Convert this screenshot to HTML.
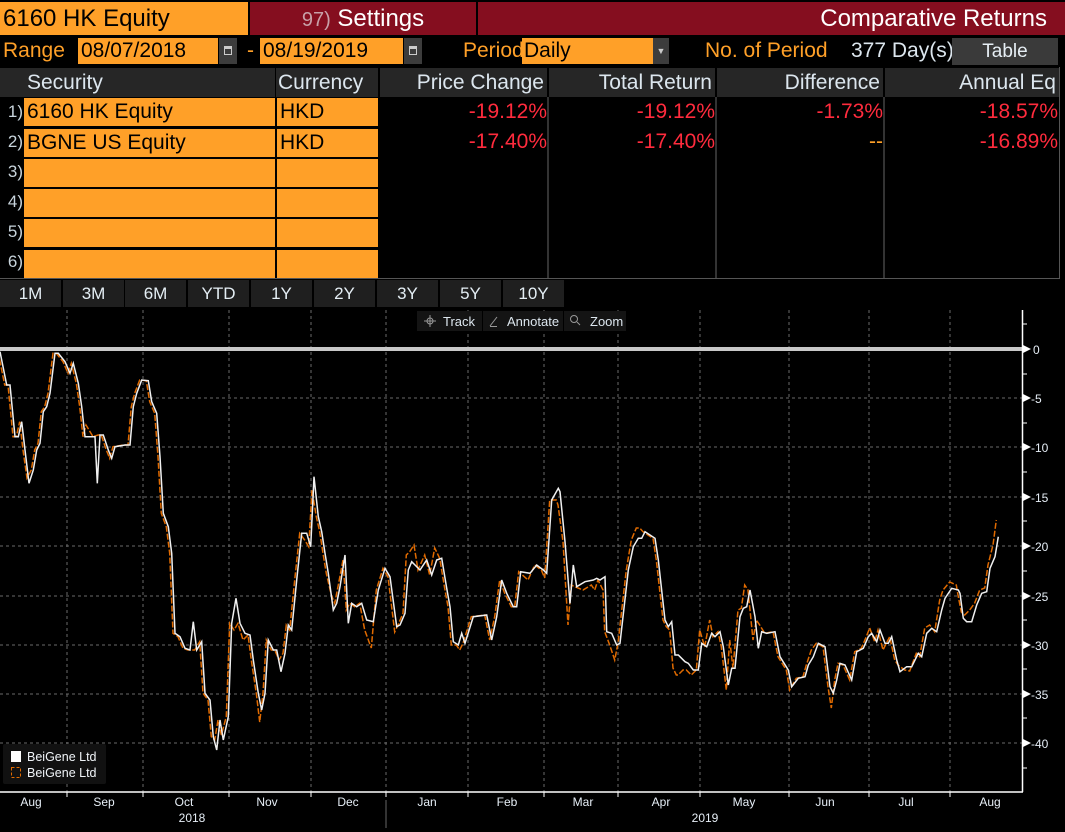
<!DOCTYPE html>
<html><head><meta charset="utf-8"><style>
*{margin:0;padding:0;box-sizing:border-box}
body{width:1065px;height:832px;background:#000;overflow:hidden;position:relative;font-family:"Liberation Sans Narrow","Liberation Sans",sans-serif;}
.a{position:absolute;white-space:nowrap;overflow:hidden}
.or{background:#ffa028;color:#000}
.red{background:#850e1f;color:#fff}
.lbl{color:#ffa028;font-size:21px;line-height:28px}
.hd{background:#262626;color:#dce6ee;font-size:21px;line-height:29px}
.num{color:#ff2b3d;font-size:21px;line-height:28px;text-align:right}
.rn{color:#c8d4dc;font-size:17px;line-height:30px;text-align:right}
.cal{background:#3c3c3c}
.btn{background:#1f1f1f;color:#e4eef4;font-size:17px;line-height:28px;text-align:center;top:280px;height:27px;width:61px}
.ax{font-family:"Liberation Sans",sans-serif;font-size:12px;fill:#e6eef6}
</style></head><body>
<div class="a or" style="left:0;top:2px;width:248px;height:33px;font-size:24px;line-height:33px;padding-left:3px">6160 HK Equity</div>
<div class="a red" style="left:250px;top:2px;width:226px;height:33px;font-size:24px;line-height:33px;text-align:center"><span style="color:#c8a0a8;font-size:20px">97)</span> Settings</div>
<div class="a red" style="left:478px;top:2px;width:587px;height:33px;font-size:24px;line-height:33px;text-align:right;padding-right:18px">Comparative Returns</div>

<div class="a lbl" style="left:3px;top:37px">Range</div>
<div class="a or" style="left:78px;top:38px;width:140px;height:26px;font-size:21px;line-height:26px;padding-left:3px">08/07/2018</div>
<div class="a cal" style="left:219px;top:38px;width:18px;height:26px"><div style="position:absolute;left:5px;top:8px;width:8px;height:9px;border:1.5px solid #ccc;border-top-width:3px"></div></div>
<div class="a lbl" style="left:247px;top:37px">-</div>
<div class="a or" style="left:260px;top:38px;width:143px;height:26px;font-size:21px;line-height:26px;padding-left:3px">08/19/2019</div>
<div class="a cal" style="left:404px;top:38px;width:18px;height:26px"><div style="position:absolute;left:5px;top:8px;width:8px;height:9px;border:1.5px solid #ccc;border-top-width:3px"></div></div>
<div class="a lbl" style="left:463px;top:37px">Period</div>
<div class="a or" style="left:522px;top:38px;width:131px;height:26px;font-size:21px;line-height:26px;padding-left:2px">Daily</div>
<div class="a cal" style="left:653px;top:38px;width:16px;height:26px;color:#ccc;font-size:9px;line-height:26px;text-align:center">▼</div>
<div class="a lbl" style="left:705px;top:37px">No. of Period</div>
<div class="a" style="left:851px;top:37px;color:#dce6ee;font-size:21px;line-height:28px">377 Day(s)</div>
<div class="a" style="left:952px;top:38px;width:106px;height:27px;background:#3a3a3a;color:#e6eef4;font-size:19px;line-height:27px;text-align:center">Table</div>

<!-- table -->
<div class="a" style="left:0;top:67px;width:1060px;height:212px;border-right:1px solid #555;border-bottom:1px solid #555"></div>
<div class="a hd" style="left:0;top:68px;width:24px;height:29px"></div>
<div class="a hd" style="left:24px;top:68px;width:251px;height:29px;padding-left:3px">Security</div>
<div class="a hd" style="left:276px;top:68px;width:102px;height:29px;padding-left:2px">Currency</div>
<div class="a hd" style="left:380px;top:68px;width:167px;height:29px;text-align:right;padding-right:3px">Price Change</div>
<div class="a hd" style="left:549px;top:68px;width:166px;height:29px;text-align:right;padding-right:3px">Total Return</div>
<div class="a hd" style="left:717px;top:68px;width:166px;height:29px;text-align:right;padding-right:3px">Difference</div>
<div class="a hd" style="left:885px;top:68px;width:174px;height:29px;text-align:right;padding-right:3px">Annual Eq</div>
<div class="a" style="left:547px;top:97px;width:2px;height:181px;background:#333"></div>
<div class="a" style="left:715px;top:97px;width:2px;height:181px;background:#333"></div>
<div class="a" style="left:883px;top:97px;width:2px;height:181px;background:#333"></div>

<div class="a rn" style="left:0;top:97px;width:23px">1)</div>
<div class="a rn" style="left:0;top:127px;width:23px">2)</div>
<div class="a rn" style="left:0;top:157px;width:23px">3)</div>
<div class="a rn" style="left:0;top:187px;width:23px">4)</div>
<div class="a rn" style="left:0;top:217px;width:23px">5)</div>
<div class="a rn" style="left:0;top:247px;width:23px">6)</div>

<div class="a or" style="left:24px;top:98px;width:251px;height:28px;font-size:21px;line-height:28px;padding-left:3px">6160 HK Equity</div>
<div class="a or" style="left:277px;top:98px;width:101px;height:28px;font-size:21px;line-height:28px;padding-left:3px">HKD</div>
<div class="a or" style="left:24px;top:129px;width:251px;height:28px;font-size:21px;line-height:28px;padding-left:3px">BGNE US Equity</div>
<div class="a or" style="left:277px;top:129px;width:101px;height:28px;font-size:21px;line-height:28px;padding-left:3px">HKD</div>
<div class="a or" style="left:24px;top:159px;width:251px;height:28px"></div>
<div class="a or" style="left:277px;top:159px;width:101px;height:28px"></div>
<div class="a or" style="left:24px;top:189px;width:251px;height:28px"></div>
<div class="a or" style="left:277px;top:189px;width:101px;height:28px"></div>
<div class="a or" style="left:24px;top:219px;width:251px;height:28px"></div>
<div class="a or" style="left:277px;top:219px;width:101px;height:28px"></div>
<div class="a or" style="left:24px;top:250px;width:251px;height:28px"></div>
<div class="a or" style="left:277px;top:250px;width:101px;height:28px"></div>

<div class="a num" style="left:380px;top:98px;width:167px">-19.12%</div>
<div class="a num" style="left:549px;top:98px;width:166px">-19.12%</div>
<div class="a num" style="left:717px;top:98px;width:166px">-1.73%</div>
<div class="a num" style="left:885px;top:98px;width:173px">-18.57%</div>
<div class="a num" style="left:380px;top:128px;width:167px">-17.40%</div>
<div class="a num" style="left:549px;top:128px;width:166px">-17.40%</div>
<div class="a num" style="left:717px;top:128px;width:166px;color:#ffa028">--</div>
<div class="a num" style="left:885px;top:128px;width:173px">-16.89%</div>

<div class="a btn" style="left:0">1M</div>
<div class="a btn" style="left:63px">3M</div>
<div class="a btn" style="left:125px">6M</div>
<div class="a btn" style="left:188px">YTD</div>
<div class="a btn" style="left:251px">1Y</div>
<div class="a btn" style="left:314px">2Y</div>
<div class="a btn" style="left:377px">3Y</div>
<div class="a btn" style="left:440px">5Y</div>
<div class="a btn" style="left:503px">10Y</div>

<svg class="a" style="left:0;top:308px" width="1065" height="524" viewBox="0 308 1065 524">
<g stroke="#6a6a6a" stroke-width="1" stroke-dasharray="3 3">
<line x1="67" y1="310" x2="67" y2="792"/><line x1="143" y1="310" x2="143" y2="792"/><line x1="229" y1="310" x2="229" y2="792"/><line x1="311" y1="310" x2="311" y2="792"/><line x1="386" y1="310" x2="386" y2="792"/><line x1="468" y1="310" x2="468" y2="792"/><line x1="544" y1="310" x2="544" y2="792"/><line x1="618" y1="310" x2="618" y2="792"/><line x1="700" y1="310" x2="700" y2="792"/><line x1="789" y1="310" x2="789" y2="792"/><line x1="869" y1="310" x2="869" y2="792"/><line x1="950" y1="310" x2="950" y2="792"/>
<line x1="0" y1="398" x2="1022" y2="398"/><line x1="0" y1="447" x2="1022" y2="447"/><line x1="0" y1="497" x2="1022" y2="497"/><line x1="0" y1="546" x2="1022" y2="546"/><line x1="0" y1="596" x2="1022" y2="596"/><line x1="0" y1="645" x2="1022" y2="645"/><line x1="0" y1="694" x2="1022" y2="694"/><line x1="0" y1="743" x2="1022" y2="743"/>
</g>
<line x1="0" y1="349" x2="1022" y2="349" stroke="#c8c8c8" stroke-width="4"/>
<line x1="1022.5" y1="310" x2="1022.5" y2="792" stroke="#fff" stroke-width="1.5"/>
<line x1="0" y1="792" x2="1023" y2="792" stroke="#fff" stroke-width="1.5"/>
<g stroke="#fff" stroke-width="1">
<line x1="1022" y1="324" x2="1027" y2="324"/><line x1="1022" y1="374" x2="1027" y2="374"/><line x1="1022" y1="423" x2="1027" y2="423"/><line x1="1022" y1="472" x2="1027" y2="472"/><line x1="1022" y1="521" x2="1027" y2="521"/><line x1="1022" y1="571" x2="1027" y2="571"/><line x1="1022" y1="620" x2="1027" y2="620"/><line x1="1022" y1="669" x2="1027" y2="669"/><line x1="1022" y1="718" x2="1027" y2="718"/><line x1="1022" y1="768" x2="1027" y2="768"/>
<line x1="67" y1="792" x2="67" y2="797"/><line x1="143" y1="792" x2="143" y2="797"/><line x1="229" y1="792" x2="229" y2="797"/><line x1="311" y1="792" x2="311" y2="797"/><line x1="386" y1="792" x2="386" y2="797"/><line x1="468" y1="792" x2="468" y2="797"/><line x1="544" y1="792" x2="544" y2="797"/><line x1="618" y1="792" x2="618" y2="797"/><line x1="700" y1="792" x2="700" y2="797"/><line x1="789" y1="792" x2="789" y2="797"/><line x1="869" y1="792" x2="869" y2="797"/><line x1="950" y1="792" x2="950" y2="797"/>
</g>
<line x1="386" y1="800" x2="386" y2="828" stroke="#666" stroke-width="1"/>
<g fill="#fff">
<path d="M1023 345l8 4-8 4z"/><path d="M1023 394l8 4-8 4z"/><path d="M1023 443l8 4-8 4z"/><path d="M1023 493l8 4-8 4z"/><path d="M1023 542l8 4-8 4z"/><path d="M1023 592l8 4-8 4z"/><path d="M1023 641l8 4-8 4z"/><path d="M1023 690l8 4-8 4z"/><path d="M1023 739l8 4-8 4z"/>
</g>
<g class="ax">
<text x="1033" y="354">0</text><text x="1031" y="403">-5</text><text x="1031" y="452">-10</text><text x="1031" y="502">-15</text><text x="1031" y="551">-20</text><text x="1031" y="601">-25</text><text x="1031" y="650">-30</text><text x="1031" y="699">-35</text><text x="1031" y="748">-40</text>
</g>
<g class="ax" text-anchor="middle">
<text x="31" y="806">Aug</text><text x="104" y="806">Sep</text><text x="184" y="806">Oct</text><text x="267" y="806">Nov</text><text x="348" y="806">Dec</text><text x="427" y="806">Jan</text><text x="507" y="806">Feb</text><text x="583" y="806">Mar</text><text x="661" y="806">Apr</text><text x="744" y="806">May</text><text x="825" y="806">Jun</text><text x="906" y="806">Jul</text><text x="990" y="806">Aug</text>
<text x="192" y="822">2018</text><text x="705" y="822">2019</text>
</g>
<polyline id="w" fill="none" stroke="#e06a00" stroke-width="1.5" stroke-dasharray="6 2" transform="translate(-2,0)" points="0,351.7 6.7,385 10,385 15,436.7 18.3,436.7 21.7,421.7 25,450 29,478 33.3,470 36.7,450 40,443.3 43.3,411.7 46.7,406.7 50,393.3 55,353.3 58.3,353.3 65,361.7 70,373.3 73.3,363.3 78.3,383.3 81.7,406.7 85,436.7 88,425 95,436.7 100,435 103.3,435 108.3,450 111.7,458.3 115,446.7 125,445 130,445 133.3,406.7 136.7,393.3 141.7,380 148.3,380.7 151.7,401.7 156.7,413.3 160,456.7 163.3,513.3 168.3,526.7 171.7,553.3 175,633.3 180,636.7 185,648.3 190,650 196.7,650 201.7,641.7 205,693.3 210,700 213.3,736.7 216.7,740 220,720 223.3,735 228.3,716.7 231.7,623.3 236,630 240,623.3 245,640 250,635 253.3,660 258.3,693.3 261.7,722 265,693.3 268.3,640 273.3,650 276.7,650 281,660 285,653.3 288.3,625 291.7,630 296.7,580 301.7,533.3 306.7,540 310.7,546.7 314,490 318.3,516.7 321.7,531.7 325,553.3 328.3,573.3 333.3,595 336.7,603.3 340,586.7 345,560 348.3,610 351.7,603.3 356.7,606.7 361.7,603.3 366.7,630 373.3,648 378.3,590 385,568.3 390,576.7 396.7,632 400,625 405,613.3 408.3,555 411.7,551.7 416,545 420,570 426.7,555 431.7,575 436.7,548 441.7,558.3 446.7,588.3 450,606.7 453.3,645 458.3,645 461.7,650 465,643.3 473.3,616.7 486.7,615 491.7,640 496.7,616.7 501.7,580 506.7,593.3 513.3,606.7 516.7,606.7 520.7,571.7 530,580 536.7,565 543.3,570 546.7,578 551.7,500 558.3,500 560,505 565,541.7 570,625 573.3,585 576.7,586.7 585,590 593.3,585 596.7,590 600,580 605,590 606.7,631.7 611.7,645 616.7,660 620,643.3 628.3,570 633.3,540 638.3,528 641.7,528 645,531.7 650,535 655,538.3 658.3,560 665,620 668.3,626.7 671.7,630 675,668 678.3,675 680,675 685,670 688.3,670 693.3,675 698.3,670 701.7,630 706.7,646.7 711.7,620 715,636.7 720,631.7 723.3,646.7 728.3,690 731.7,640 735,668.3 740,610 743.3,608.3 746.7,585 750,590 755,640 758.3,620 761.7,625 766.7,633.3 775,631.7 780,656.7 788.3,670 791.7,690 798.3,678.3 805,676.7 808.3,665 813.3,650 818.3,643.3 825,646.7 830,686.7 833.3,708 836.7,680 840,663.3 845,665 851.7,680 856.7,651.7 863.3,648.3 868.3,636.7 871.7,628 876.7,641.7 880,630 885,650 888.3,643.3 891.7,636.7 896.7,660 900,665 906.7,670 911.7,671 918.3,653.3 921.7,656.7 926.7,628 931.7,625 936.7,631.7 941.7,600 945,590 951.7,582 958.3,585 960,595 963.3,612 966.7,615 971.7,610 976.7,603 981.7,590 986.7,588 990,565 995,545 998.3,520"/>
<polyline fill="none" stroke="#f0f0f0" stroke-width="1.5" points="0,351.7 6.7,385 10,385 15,436.7 18.3,436.7 21.7,421.7 25,450 29,483.3 33.3,470 36.7,450 40,443.3 43.3,411.7 46.7,406.7 50,393.3 55,353.3 58.3,353.3 65,361.7 70,373.3 73.3,363.3 78.3,383.3 81.7,406.7 85,436.7 95,436.7 97.3,483.3 100,435 103.3,435 108.3,450 111.7,458.3 115,446.7 125,445 130,445 133.3,406.7 136.7,393.3 141.7,380 148.3,380.7 151.7,401.7 156.7,413.3 160,456.7 163.3,513.3 168.3,526.7 171.7,553.3 175,633.3 180,636.7 185,648.3 190,650 193.3,621.7 196.7,650 201.7,641.7 205,693.3 210,700 213.3,736.7 216.7,750 220,720 223.3,740 228.3,716.7 231.7,623.3 236,598.3 240,623.3 245,633.3 250,635 253.3,660 258.3,693.3 261.7,710 265,693.3 268.3,640 273.3,650 276.7,650 281,671.7 285,653.3 288.3,625 291.7,630 296.7,580 301.7,533.3 306.7,533.3 310.7,546.7 314,476.7 318.3,516.7 321.7,531.7 325,553.3 328.3,573.3 333.3,610 336.7,603.3 340,586.7 345,555 348.3,623.3 351.7,603.3 356.7,606.7 361.7,603.3 366.7,620 373.3,621.7 378.3,590 385,568.3 390,576.7 396.7,626.7 400,625 405,613.3 408.3,570 411.7,561.7 420,570 426.7,560 431.7,575 436.7,560 441.7,558.3 446.7,588.3 450,606.7 453.3,641.7 458.3,645 461.7,633.3 465,643.3 473.3,616.7 486.7,615 491.7,640 496.7,616.7 501.7,580 506.7,593.3 513.3,606.7 516.7,606.7 520.7,571.7 530,573.3 536.7,565 543.3,570 546.7,573.3 551.7,500 558.3,488.3 560,491.7 565,541.7 570,603.3 573.3,565 576.7,586.7 585,581.7 593.3,580 596.7,578.3 600,580 605,576.7 606.7,631.7 611.7,633.3 616.7,645 620,643.3 628.3,570 633.3,546.7 638.3,538.3 641.7,538.3 645,531.7 650,535 655,538.3 658.3,560 665,620 668.3,626.7 671.7,621.7 675,655 678.3,655 680,656.7 685,661.7 688.3,663.3 693.3,670 698.3,670 701.7,643.3 706.7,646.7 711.7,633.3 715,636.7 720,631.7 723.3,646.7 728.3,685 731.7,668.3 735,668.3 740,616.7 743.3,608.3 746.7,606.7 750,590 755,616.7 758.3,648.3 761.7,631.7 766.7,633.3 775,631.7 780,656.7 788.3,670 791.7,686.7 798.3,678.3 805,676.7 808.3,665 813.3,656.7 818.3,643.3 825,646.7 830,686.7 833.3,693.3 836.7,680 840,663.3 845,665 851.7,680 856.7,651.7 863.3,648.3 868.3,636.7 871.7,633.3 876.7,641.7 880,630 885,643.3 888.3,643.3 891.7,636.7 896.7,660 900,671.7 906.7,666.7 911.7,666.7 918.3,653.3 921.7,656.7 926.7,633.3 931.7,628.3 936.7,631.7 941.7,610 945,598.3 951.7,588.3 958.3,590 960,593.3 963.3,618.3 966.7,621.7 971.7,621.7 976.7,605 981.7,593.3 986.7,591.7 990,568.3 995,556.7 998.3,536.7"/>
<!-- toolbar -->
<rect x="417" y="311" width="65" height="20" fill="#141414"/>
<rect x="483" y="311" width="80" height="20" fill="#141414"/>
<rect x="564" y="311" width="62" height="20" fill="#141414"/>
<g stroke="#999" stroke-width="1" fill="none">
<circle cx="430" cy="321" r="3"/><line x1="424" y1="321" x2="436" y2="321"/><line x1="430" y1="315" x2="430" y2="327"/>
<line x1="490" y1="326" x2="497" y2="317"/><line x1="490" y1="326.5" x2="497" y2="326.5"/>
<circle cx="574" cy="319" r="3.5"/><line x1="577" y1="322" x2="580" y2="325"/>
</g>
<g font-family="Liberation Sans Narrow,Liberation Sans,sans-serif" font-size="13" fill="#dce6ee">
<text x="443" y="326">Track</text><text x="507" y="326">Annotate</text><text x="590" y="326">Zoom</text>
</g>
<!-- legend -->
<rect x="3" y="744" width="103" height="40" rx="2" fill="#111"/>
<rect x="11" y="751" width="10" height="11" fill="#fff"/>
<rect x="11.5" y="767.5" width="9" height="10" fill="none" stroke="#e06a00" stroke-width="1" stroke-dasharray="3 2"/>
<g font-family="Liberation Sans Narrow,Liberation Sans,sans-serif" font-size="12.5" fill="#f0f4f8">
<text x="27" y="761">BeiGene Ltd</text><text x="27" y="777">BeiGene Ltd</text>
</g>
</svg>
</body></html>
